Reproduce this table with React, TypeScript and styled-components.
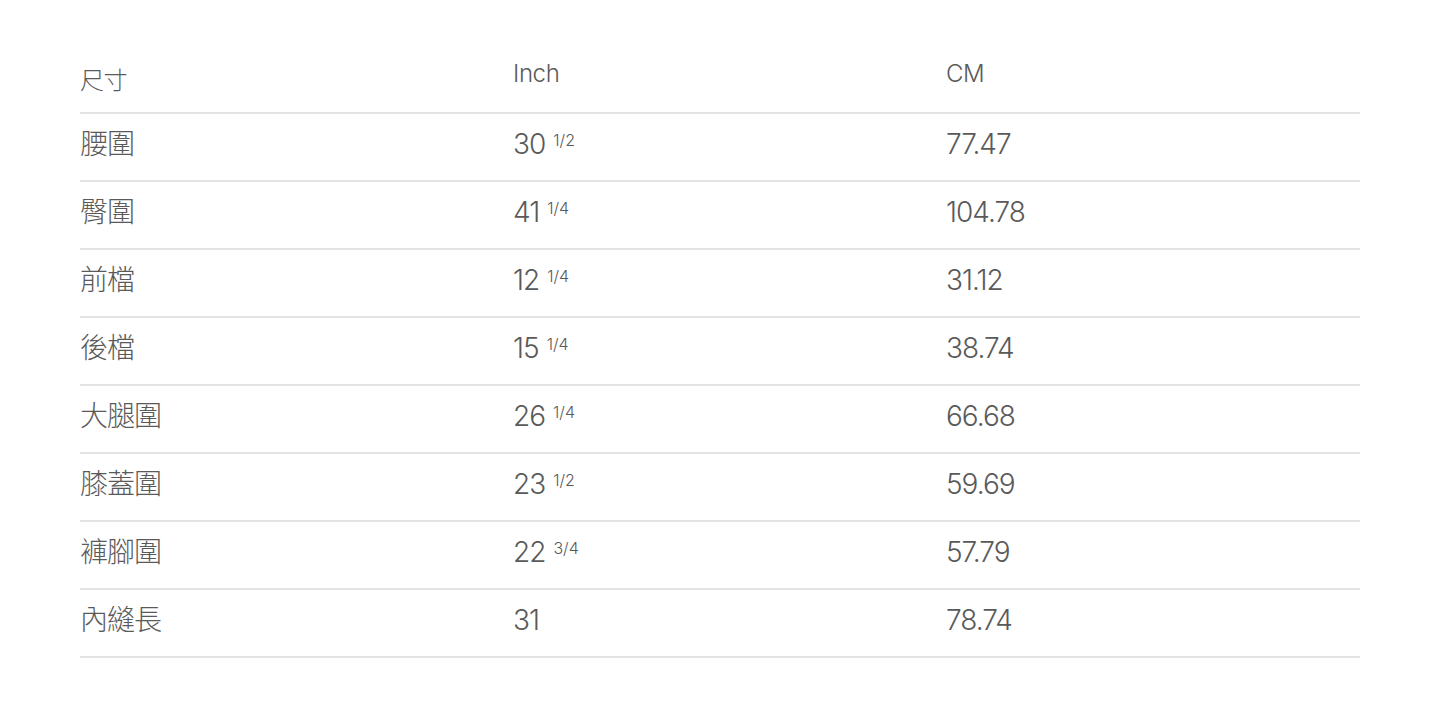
import React from "react";
import styled, { createGlobalStyle } from "styled-components";

const Global = createGlobalStyle`
  html, body { margin: 0; padding: 0; background: #ffffff; }
  body { font-family: Inter, "Noto Sans CJK TC", sans-serif; color: #5a5a5a; }
`;

const Page = styled.div`
  padding: 48px 80px 0 80px;
`;

const Table = styled.div`
  display: flex;
  flex-direction: column;
`;

const Row = styled.div<{ $head?: boolean }>`
  display: grid;
  grid-template-columns: 433px 433px 1fr;
  align-items: center;
  height: ${(p) => (p.$head ? "64px" : "66px")};
  border-bottom: 2px solid #e3e3e3;
`;

const HeadCell = styled.div<{ $cjk?: boolean }>`
  font-family: Inter, "Noto Sans CJK TC", sans-serif;
  font-size: 24px;
  font-weight: 300;
  line-height: 1;
  letter-spacing: -0.4px;
  margin-top: ${(p) => (p.$cjk ? "2px" : "-12px")};
`;

const Cell = styled.div`
  font-family: Inter, "Noto Sans CJK TC", sans-serif;
  font-size: 28px;
  font-weight: 300;
  line-height: 1;
  letter-spacing: -1px;
  margin-top: -6px;
  display: flex;
  align-items: flex-start;
`;

const Frac = styled.span`
  font-size: 16px;
  letter-spacing: 0;
  margin-left: 8px;
  margin-top: 2px;
`;

const rows: [string, string, string | null, string][] = [
  ["腰圍", "30", "1/2", "77.47"],
  ["臀圍", "41", "1/4", "104.78"],
  ["前檔", "12", "1/4", "31.12"],
  ["後檔", "15", "1/4", "38.74"],
  ["大腿圍", "26", "1/4", "66.68"],
  ["膝蓋圍", "23", "1/2", "59.69"],
  ["褲腳圍", "22", "3/4", "57.79"],
  ["內縫長", "31", null, "78.74"],
];

export default function App() {
  return (
    <>
      <Global />
      <Page>
        <Table>
          <Row $head>
            <HeadCell $cjk>尺寸</HeadCell>
            <HeadCell>Inch</HeadCell>
            <HeadCell>CM</HeadCell>
          </Row>
          {rows.map(([name, whole, frac, cm]) => (
            <Row key={name}>
              <Cell>{name}</Cell>
              <Cell>
                {whole}
                {frac && <Frac>{frac}</Frac>}
              </Cell>
              <Cell>{cm}</Cell>
            </Row>
          ))}
        </Table>
      </Page>
    </>
  );
}
